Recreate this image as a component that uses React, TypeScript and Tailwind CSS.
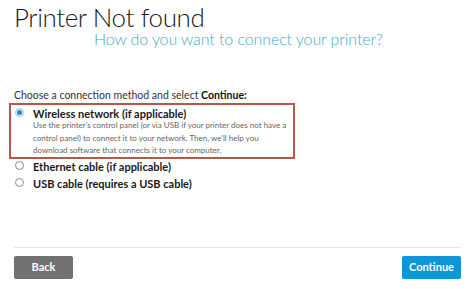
import { useState } from "react";

const options = [
  {
    id: "wireless",
    label: "Wireless network (if applicable)",
    lines: [
      "Use the printer's control panel (or via USB if your printer does not have a",
      "control panel) to connect it to your network. Then, we'll help you",
      "download software that connects it to your computer.",
    ],
  },
  { id: "ethernet", label: "Ethernet cable (if applicable)" },
  { id: "usb", label: "USB cable (requires a USB cable)" },
];

const Radio = ({ checked }: { checked: boolean }) => (
  <span
    className={`mt-[1px] flex h-[9px] w-[9px] shrink-0 items-center justify-center rounded-full border ${
      checked ? "border-[#9cc6e0] bg-[#eaf4fb]" : "border-[#8a8a8a] bg-white"
    }`}
  >
    {checked && <span className="h-[5px] w-[5px] rounded-full bg-[#2a86c8]" />}
  </span>
);

const App = () => {
  const [selected, setSelected] = useState("wireless");

  return (
    <div
      className="flex h-[289px] w-[475px] flex-col bg-white px-[14px]"
      style={{ fontFamily: 'Lato, "Open Sans", sans-serif' }}
    >
      <h1 className="mt-[4px] text-[26px] font-light leading-[26px] tracking-[-0.4px] text-[#1b1b1b]">
        Printer Not found
      </h1>
      <p className="mt-[1px] pl-[80px] text-[16px] font-light leading-[16px] tracking-[-0.1px] text-[#4aa9c3]">
        How do you want to connect your printer?
      </p>

      <p className="mt-[43px] text-[10.5px] leading-[11px] text-[#333]">
        Choose a connection method and select{" "}
        <span className="font-bold text-[#111]">Continue:</span>
      </p>

      <div className="mt-[2px] flex flex-col">
        {options.map((opt) => {
          const checked = selected === opt.id;
          return (
            <div
              key={opt.id}
              onClick={() => setSelected(opt.id)}
              className={`-ml-[5px] flex cursor-pointer gap-[9px] ${
                opt.lines
                  ? "h-[56px] w-[286px] border-2 border-[#b4594a] pl-[4px] pt-[2px]"
                  : "h-[17px] pl-[6px] pt-[1px]"
              }`}
            >
              <Radio checked={checked} />
              <div className="flex flex-col">
                <span
                  className={`text-[11px] font-bold text-[#1a1a1a] ${
                    opt.lines ? "leading-[13px]" : "leading-[14px]"
                  }`}
                >
                  {opt.label}
                </span>
                {opt.lines && (
                  <span className="-mt-[1px] whitespace-nowrap text-[8px] leading-[12.5px] text-[#666]">
                    {opt.lines.map((line) => (
                      <span key={line} className="block">
                        {line}
                      </span>
                    ))}
                  </span>
                )}
              </div>
            </div>
          );
        })}
      </div>

      <div className="mt-auto border-t border-[#e6e6e6] pb-[10px] pt-[8px]">
        <div className="flex justify-between">
          <button className="h-[23px] w-[59px] rounded-[2px] bg-[#717171] text-[11px] font-bold text-white">
            Back
          </button>
          <button className="h-[23px] w-[59px] rounded-[2px] bg-[#0f96d6] text-[11px] font-bold text-white">
            Continue
          </button>
        </div>
      </div>
    </div>
  );
};

export default App;
